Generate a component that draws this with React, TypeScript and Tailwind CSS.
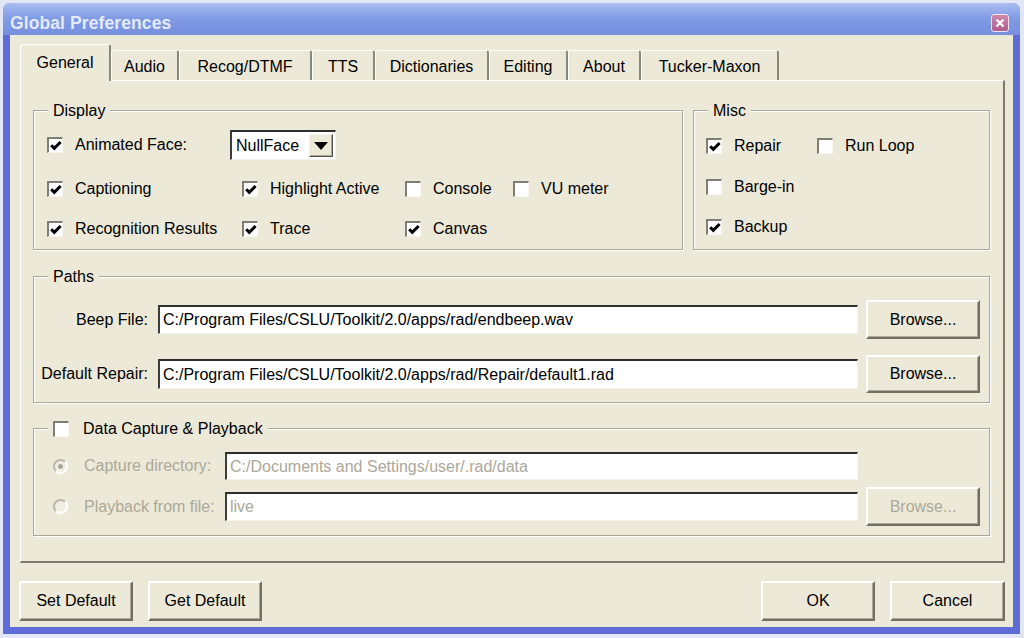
import React from 'react';

const tabs = [
  { label: 'General', w: 'w-[91px]' },
  { label: 'Audio', w: 'w-[68px]' },
  { label: 'Recog/DTMF', w: 'w-[133px]' },
  { label: 'TTS', w: 'w-[63px]' },
  { label: 'Dictionaries', w: 'w-[114px]' },
  { label: 'Editing', w: 'w-[79px]' },
  { label: 'About', w: 'w-[73px]' },
  { label: 'Tucker-Maxon', w: 'w-[138px]' },
];

// sunken checkbox, classic look
const Box = ({ checked }: { checked?: boolean }) => (
  <span className="flex h-[16px] w-[16px] shrink-0 items-center justify-center border-t-2 border-l-2 border-r border-b border-t-[#807e74] border-l-[#807e74] border-r-[#f7f6f0] border-b-[#f7f6f0] bg-white">
    {checked && (
      <svg viewBox="0 0 12 12" className="h-[12px] w-[12px]">
        <path d="M1.2 5.2 L4.3 8.4 L10.6 2" stroke="#000" strokeWidth="3" fill="none" />
      </svg>
    )}
  </span>
);

const Check = ({ checked, label }: { checked?: boolean; label: string }) => (
  <div className="flex items-center">
    <Box checked={checked} />
    <span className="ml-[12px] whitespace-nowrap">{label}</span>
  </div>
);

const Radio = ({ on }: { on?: boolean }) => (
  <span className="flex h-[15px] w-[15px] shrink-0 items-center justify-center rounded-full border-2 border-t-[#b9b7aa] border-l-[#b9b7aa] border-r-white border-b-white bg-[#f1efe4]">
    {on && <span className="h-[5px] w-[5px] rounded-full bg-[#aca899]" />}
  </span>
);

const Btn = ({ label, disabled, className = '' }: { label: string; disabled?: boolean; className?: string }) => (
  <button
    type="button"
    className={`flex shrink-0 items-center justify-center border-2 border-t-white border-l-white border-r-[#716f64] border-b-[#716f64] bg-[#ece9d8] shadow-[inset_-1px_-1px_0_#aca899] ${
      disabled ? 'text-[#aca899]' : 'text-black'
    } ${className}`}
  >
    {label}
  </button>
);

const Field = ({ value, disabled, className = '' }: { value: string; disabled?: boolean; className?: string }) => (
  <div
    className={`flex items-center overflow-hidden whitespace-nowrap border-t-2 border-l-2 border-r border-b border-t-[#2e2e2e] border-l-[#3c3c3c] border-r-[#f4f3ee] border-b-[#f4f3ee] bg-white pl-[3px] ${
      disabled ? 'text-[#aca899]' : 'text-black'
    } ${className}`}
  >
    {value}
  </div>
);

const Group = ({ legend, className = '', children }: { legend: React.ReactNode; className?: string; children: React.ReactNode }) => (
  <div className={`relative border border-[#aca899] shadow-[inset_1px_1px_0_#fff,1px_1px_0_#fff] ${className}`}>
    <div className="absolute left-[14px] top-0 -translate-y-1/2 bg-[#ece9d8] px-[5px]">{legend}</div>
    {children}
  </div>
);

export default function App() {
  return (
    <div className="h-[638px] w-[1024px] overflow-hidden bg-[#e3e6f4] pl-[3px] pt-[3px] font-['Liberation_Sans',Arial,sans-serif] text-[16px] text-black">
      <div className="flex h-[631px] w-[1017px] flex-col rounded-t-[7px] bg-[#5f6cd7]">
        {/* title bar */}
        <div className="flex h-[32px] items-center justify-between rounded-t-[7px] bg-gradient-to-b from-[#aabef2] via-[#7f9ae3] to-[#7690df] pl-[7px] pr-[11px] pt-[8px]">
          <span className="text-[17.5px] font-bold tracking-[0.1px] text-[#e2e9f9]">Global Preferences</span>
          <span className="flex h-[18px] w-[18px] items-center justify-center rounded-[3px] border border-[#eee4f0] bg-gradient-to-b from-[#cf86ad] to-[#ad5f90]">
            <svg viewBox="0 0 10 10" className="h-[10px] w-[10px]">
              <path d="M1.5 1.5 L8.5 8.5 M8.5 1.5 L1.5 8.5" stroke="#fff" strokeWidth="2.2" />
            </svg>
          </span>
        </div>

        {/* body */}
        <div className="mx-[7px] mb-[7px] flex flex-1 flex-col bg-[#ece9d8]">
          {/* tabs */}
          <div className="ml-[10px] mt-[9px] flex h-[36px] items-end">
            {tabs.map((t, i) =>
              i === 0 ? (
                <div
                  key={t.label}
                  className={`relative z-10 -mb-[1px] flex h-[37px] items-center justify-center rounded-t-[3px] border-l border-t border-r-2 border-l-white border-t-white border-r-[#8a887c] bg-[#ece9d8] pb-[1px] ${t.w}`}
                >
                  {t.label}
                </div>
              ) : (
                <div
                  key={t.label}
                  className={`flex h-[30px] items-center justify-center rounded-t-[3px] border-l border-t border-r-2 border-l-white border-t-white border-r-[#8a887c] bg-[#ece9d8] pt-[2px] ${t.w}`}
                >
                  {t.label}
                </div>
              ),
            )}
          </div>

          {/* tab panel */}
          <div className="ml-[10px] h-[483px] w-[985px] border-l border-t border-r-2 border-b-2 border-l-white border-t-white border-r-[#7d7b70] border-b-[#7d7b70] pl-[12px] pt-[29px]">
            <div className="flex">
              <Group legend="Display" className="h-[140px] w-[650px]">
                <div className="pl-[13px] pt-[19px]">
                  <div className="flex h-[30px] items-center">
                    <div className="w-[183px]">
                      <Check checked label="Animated Face:" />
                    </div>
                    <div className="flex h-[30px] w-[106px] items-center border-t-2 border-l-2 border-r border-b border-t-[#2e2e2e] border-l-[#3c3c3c] border-r-[#f4f3ee] border-b-[#f4f3ee] bg-white pl-[4px] pr-[2px]">
                      <span className="flex-1">NullFace</span>
                      <span className="flex h-[23px] w-[24px] items-center justify-center border border-t-[#f4f3ee] border-l-[#f4f3ee] border-r-[#55544c] border-b-[#55544c] bg-[#ece9d8] shadow-[inset_-1px_-1px_0_#aca899]">
                        <span className="h-0 w-0 border-l-[7px] border-r-[7px] border-t-[8px] border-l-transparent border-r-transparent border-t-black" />
                      </span>
                    </div>
                  </div>
                  <div className="mt-[14px] flex h-[30px] items-center">
                    <div className="w-[195px]">
                      <Check checked label="Captioning" />
                    </div>
                    <div className="w-[163px]">
                      <Check checked label="Highlight Active" />
                    </div>
                    <div className="w-[108px]">
                      <Check label="Console" />
                    </div>
                    <Check label="VU meter" />
                  </div>
                  <div className="mt-[10px] flex h-[30px] items-center">
                    <div className="w-[195px]">
                      <Check checked label="Recognition Results" />
                    </div>
                    <div className="w-[163px]">
                      <Check checked label="Trace" />
                    </div>
                    <Check checked label="Canvas" />
                  </div>
                </div>
              </Group>

              <Group legend="Misc" className="ml-[10px] h-[140px] w-[297px]">
                <div className="pl-[12px] pt-[20px]">
                  <div className="flex h-[30px] items-center">
                    <div className="w-[111px]">
                      <Check checked label="Repair" />
                    </div>
                    <Check label="Run Loop" />
                  </div>
                  <div className="mt-[11px] flex h-[30px] items-center">
                    <Check label="Barge-in" />
                  </div>
                  <div className="mt-[10px] flex h-[30px] items-center">
                    <Check checked label="Backup" />
                  </div>
                </div>
              </Group>
            </div>

            <Group legend="Paths" className="mt-[26px] h-[127px] w-[957px]">
              <div className="pt-[23px]">
                <div className="flex h-[39px] items-center">
                  <span className="w-[114px] text-right">Beep File:</span>
                  <Field value="C:/Program Files/CSLU/Toolkit/2.0/apps/rad/endbeep.wav" className="ml-[10px] h-[29px] w-[700px]" />
                  <Btn label="Browse..." className="ml-[8px] h-[39px] w-[114px]" />
                </div>
                <div className="mt-[16px] flex h-[38px] items-center">
                  <span className="w-[114px] whitespace-nowrap text-right">Default Repair:</span>
                  <Field value="C:/Program Files/CSLU/Toolkit/2.0/apps/rad/Repair/default1.rad" className="ml-[10px] h-[30px] w-[700px]" />
                  <Btn label="Browse..." className="ml-[8px] h-[38px] w-[114px]" />
                </div>
              </div>
            </Group>

            <Group
              legend={
                <div className="flex items-center">
                  <Box />
                  <span className="ml-[14px]">Data Capture &amp; Playback</span>
                </div>
              }
              className="mt-[25px] h-[108px] w-[957px]"
            >
              <div className="pl-[19px] pt-[23px]">
                <div className="flex h-[28px] items-center">
                  <div className="flex w-[172px] items-center text-[#aca899]">
                    <Radio on />
                    <span className="ml-[16px] whitespace-nowrap">Capture directory:</span>
                  </div>
                  <Field disabled value="C:/Documents and Settings/user/.rad/data" className="h-[28px] w-[633px]" />
                </div>
                <div className="mt-[7px] flex h-[39px] items-center">
                  <div className="flex w-[172px] items-center text-[#aca899]">
                    <Radio />
                    <span className="ml-[16px] whitespace-nowrap">Playback from file:</span>
                  </div>
                  <Field disabled value="live" className="h-[29px] w-[633px]" />
                  <Btn disabled label="Browse..." className="ml-[8px] h-[39px] w-[114px]" />
                </div>
              </div>
            </Group>
          </div>

          {/* dialog buttons */}
          <div className="mt-[18px] flex h-[40px] items-center pl-[9px] pr-[8px]">
            <Btn label="Set Default" className="h-[40px] w-[114px]" />
            <Btn label="Get Default" className="ml-[15px] h-[40px] w-[114px]" />
            <div className="flex-1" />
            <Btn label="OK" className="h-[40px] w-[114px]" />
            <Btn label="Cancel" className="ml-[15px] h-[40px] w-[115px]" />
          </div>
        </div>
      </div>
    </div>
  );
}
